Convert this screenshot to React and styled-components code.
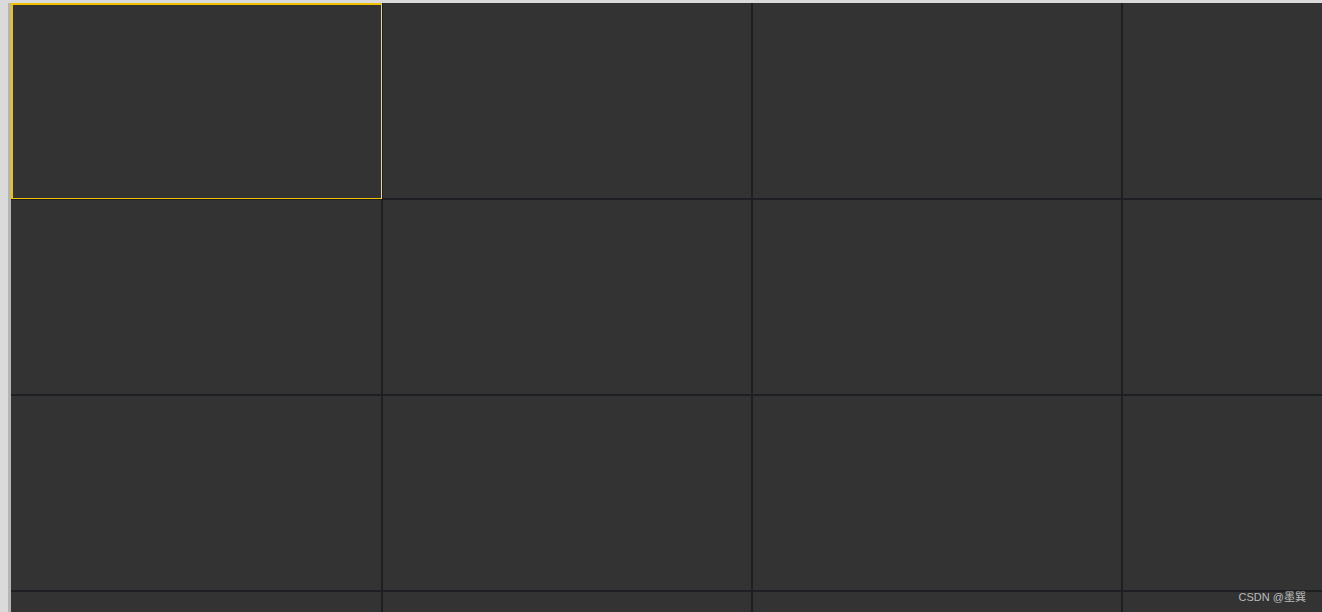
import React from "react";
import styled, { createGlobalStyle, css } from "styled-components";

const Global = createGlobalStyle`
  html, body { margin: 0; padding: 0; height: 100%; overflow: hidden; background: #dadada; }
  #root { height: 100%; }
`;

const Page = styled.div`
  position: relative;
  width: 1322px;
  height: 612px;
  display: flex;
  flex-direction: column;
  background: #dadada;
  overflow: hidden;
  font-family: "Liberation Sans", Arial, "Noto Sans CJK SC", sans-serif;
`;

const TopBar = styled.div`
  height: 3px;
  flex: none;
  background: #dadada;
`;

const Body = styled.div`
  flex: 1;
  display: flex;
  min-height: 0;
`;

const Gutter = styled.div`
  width: 8px;
  flex: none;
  background: #dadada;
`;

const Strip = styled.div`
  width: 3px;
  flex: none;
  background: #b5b5b5;
`;

const Grid = styled.div`
  flex: 1;
  display: grid;
  grid-template-columns: 370px 368px 368px 1fr;
  grid-template-rows: 195px 194px 194px 1fr;
  gap: 2px;
  background: #1d1f23;
  overflow: hidden;
`;

const Cell = styled.div`
  position: relative;
  background: #333333;
  ${(p) =>
    p.$selected &&
    css`
      z-index: 1;
      &::after {
        content: "";
        position: absolute;
        left: 0;
        top: 0;
        right: -1px;
        bottom: -1px;
        border: 2px solid #f2c200;
        border-right: 1px solid #e4d8a0;
        border-bottom: 1px solid #f2c200;
        pointer-events: none;
      }
    `}
`;

const Watermark = styled.div`
  position: absolute;
  right: 16px;
  bottom: 8px;
  font-size: 11px;
  color: rgba(215, 215, 215, 0.85);
`;

export default function App() {
  const cells = Array.from({ length: 16 }, (_, i) => i);
  return (
    <>
      <Global />
      <Page>
        <TopBar />
        <Body>
          <Gutter />
          <Strip />
          <Grid>
            {cells.map((i) => (
              <Cell key={i} $selected={i === 0} />
            ))}
          </Grid>
        </Body>
        <Watermark>CSDN @墨巽</Watermark>
      </Page>
    </>
  );
}
